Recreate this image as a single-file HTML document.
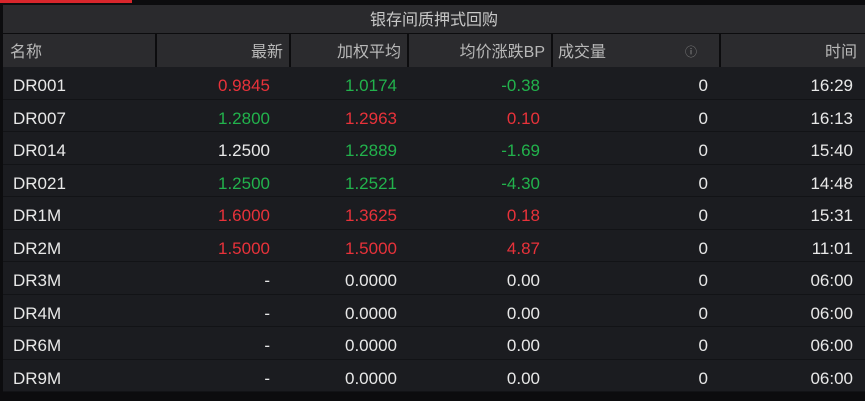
<!DOCTYPE html><html><head><style>
body{margin:0;width:865px;height:401px;background:#0c0c0e;overflow:hidden;font-family:"Liberation Sans","Noto Sans CJK SC",sans-serif;position:relative}
.red{position:absolute;left:0;top:0;width:132px;height:3px;background:#d8262c}
.title{position:absolute;left:3px;top:5px;width:862px;height:28px;background:#2a2a2d;color:#c8c8c8;font-size:16px;text-align:center;line-height:32px}
.hdr{position:absolute;top:34px;height:33px;background:#2b2b2e;color:#b8b8b8;font-size:16px;line-height:37px;box-sizing:border-box}
.row{position:absolute;left:3px;width:862px;height:32.5px;background:#1b1c20;border-bottom:1px solid #121316;box-sizing:border-box}
.c{position:absolute;font-size:17px;line-height:38px;color:#e8e8e8}
.r{color:#e8323a}.g{color:#22b24c}
</style></head><body>
<div class="red"></div>
<div class="title">银存间质押式回购</div>
<div class="hdr" style="left:3px;width:152px;padding-left:7px">名称</div>
<div class="hdr" style="left:157px;width:132px;text-align:right;padding-right:6px">最新</div>
<div class="hdr" style="left:291px;width:116px;text-align:right;padding-right:6px">加权平均</div>
<div class="hdr" style="left:409px;width:142px;text-align:right;padding-right:6px">均价涨跌BP</div>
<div class="hdr" style="left:553px;width:166px;padding-left:5px">成交量<span style="position:absolute;left:132px;font-size:12px;color:#888">ⓘ</span></div>
<div class="hdr" style="left:721px;width:144px;text-align:right;padding-right:8px">时间</div>
<div id="rows"></div>
<script>
var d=[["DR001","0.9845","r","1.0174","g","-0.38","g","16:29"],["DR007","1.2800","g","1.2963","r","0.10","r","16:13"],["DR014","1.2500","","1.2889","g","-1.69","g","15:40"],["DR021","1.2500","g","1.2521","g","-4.30","g","14:48"],["DR1M","1.6000","r","1.3625","r","0.18","r","15:31"],["DR2M","1.5000","r","1.5000","r","4.87","r","11:01"],["DR3M","-","","0.0000","","0.00","","06:00"],["DR4M","-","","0.0000","","0.00","","06:00"],["DR6M","-","","0.0000","","0.00","","06:00"],["DR9M","-","","0.0000","","0.00","","06:00"]];
var h="";d.forEach(function(x,i){var t=67+i*32.5;h+='<div class="row" style="top:'+t+'px">'+
'<span class="c" style="left:10px">'+x[0]+'</span>'+
'<span class="c '+x[2]+'" style="right:'+(865-270)+'px">'+x[1]+'</span>'+
'<span class="c '+x[4]+'" style="right:'+(865-397)+'px">'+x[3]+'</span>'+
'<span class="c '+x[6]+'" style="right:'+(865-540)+'px">'+x[5]+'</span>'+
'<span class="c" style="right:'+(865-708)+'px">0</span>'+
'<span class="c" style="right:'+(865-853)+'px">'+x[7]+'</span></div>';});
document.getElementById("rows").innerHTML=h;
</script>
</body></html>
